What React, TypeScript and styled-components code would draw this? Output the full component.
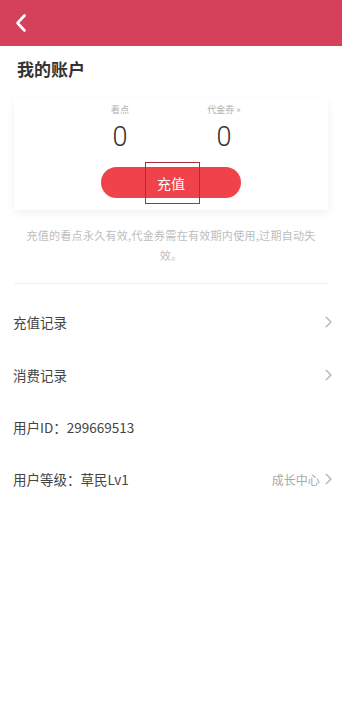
import React from "react";
import styled, { createGlobalStyle } from "styled-components";

const GlobalStyle = createGlobalStyle`
    html, body {
        margin: 0;
        padding: 0;
        background: #ffffff;
        font-family: "Noto Sans CJK SC", "Noto Sans", sans-serif;
    }
`;

const Page = styled.div`
    width: 342px;
    min-height: 720px;
    background: #ffffff;
`;

const Header = styled.div`
    height: 46px;
    background: #d5405a;
    display: flex;
    align-items: center;
    padding-left: 15px;
`;

const Title = styled.div`
    font-size: 17px;
    font-weight: 700;
    color: #333333;
    padding: 10px 0 0 17px;
    line-height: 26px;
`;

const Card = styled.div`
    margin: 16px 14px 0;
    height: 112px;
    background: #ffffff;
    box-shadow: 0 3px 8px rgba(0, 0, 0, 0.06);
    display: flex;
    flex-direction: column;
    align-items: center;
`;

const Stats = styled.div`
    display: flex;
    justify-content: center;
    gap: 52px;
    margin-top: 5px;
    margin-left: 2px;
`;

const Stat = styled.div`
    width: 52px;
    display: flex;
    flex-direction: column;
    align-items: center;
`;

const StatLabel = styled.div`
    font-size: 9px;
    color: #b0b0b0;
    line-height: 14px;
`;

const StatValue = styled.div`
    font-family: "Roboto", "Noto Sans", sans-serif;
    font-weight: 300;
    font-size: 27px;
    color: #333333;
    line-height: 30px;
    margin-top: 5px;
`;

const ChargeButton = styled.div`
    position: relative;
    margin-top: 15px;
    width: 140px;
    height: 31px;
    border-radius: 16px;
    background: #f0424a;
    color: #ffffff;
    font-size: 14px;
    display: flex;
    align-items: center;
    justify-content: center;
`;

const FocusBox = styled.div`
    position: absolute;
    left: 44px;
    top: -5px;
    width: 55px;
    height: 42px;
    border: 1px solid #a8303a;
    box-sizing: border-box;
`;

const Notice = styled.div`
    margin: 15px 24px 0;
    font-size: 11px;
    letter-spacing: 0.3px;
    line-height: 20px;
    color: #bdbdbd;
    text-align: center;
`;

const Divider = styled.div`
    margin: 18px 14px 0;
    height: 1px;
    background: #f0f0f0;
`;

const List = styled.div`
    padding-top: 12px;
`;

const Row = styled.div`
    height: 52.4px;
    display: flex;
    align-items: center;
    justify-content: space-between;
    padding: 0 10px 0 13px;
`;

const RowLabel = styled.div`
    font-size: 13.5px;
    color: #444444;
`;

const RowRight = styled.div`
    display: flex;
    align-items: center;
    gap: 5px;
    font-size: 12px;
    color: #a8a8a8;
`;

const Chevron: React.FC<{ size?: number; color?: string; width?: number }> = ({ size = 12, color = "#bbbbbb", width = 1.3 }) => (
    <svg width={size * 0.6} height={size} viewBox="0 0 6 10" fill="none">
        <path d="M1 1 L5 5 L1 9" stroke={color} strokeWidth={width} strokeLinecap="round" strokeLinejoin="round" />
    </svg>
);

const BackIcon = () => (
    <svg width="12" height="20" viewBox="0 0 12 20" fill="none">
        <path d="M9.5 2.5 L2.5 10 L9.5 17.5" stroke="#ffffff" strokeWidth="2.6" strokeLinecap="round" strokeLinejoin="round" />
    </svg>
);

const App: React.FC = () => {
    return (
        <Page>
            <GlobalStyle />
            <Header>
                <BackIcon />
            </Header>
            <Title>我的账户</Title>
            <Card>
                <Stats>
                    <Stat>
                        <StatLabel>看点</StatLabel>
                        <StatValue>0</StatValue>
                    </Stat>
                    <Stat>
                        <StatLabel>代金券 »</StatLabel>
                        <StatValue>0</StatValue>
                    </Stat>
                </Stats>
                <ChargeButton>
                    充值
                    <FocusBox />
                </ChargeButton>
            </Card>
            <Notice>充值的看点永久有效,代金券需在有效期内使用,过期自动失效。</Notice>
            <Divider />
            <List>
                <Row>
                    <RowLabel>充值记录</RowLabel>
                    <RowRight><Chevron /></RowRight>
                </Row>
                <Row>
                    <RowLabel>消费记录</RowLabel>
                    <RowRight><Chevron /></RowRight>
                </Row>
                <Row>
                    <RowLabel>用户ID：299669513</RowLabel>
                </Row>
                <Row>
                    <RowLabel>用户等级：草民Lv1</RowLabel>
                    <RowRight>成长中心<Chevron /></RowRight>
                </Row>
            </List>
        </Page>
    );
};

export default App;
